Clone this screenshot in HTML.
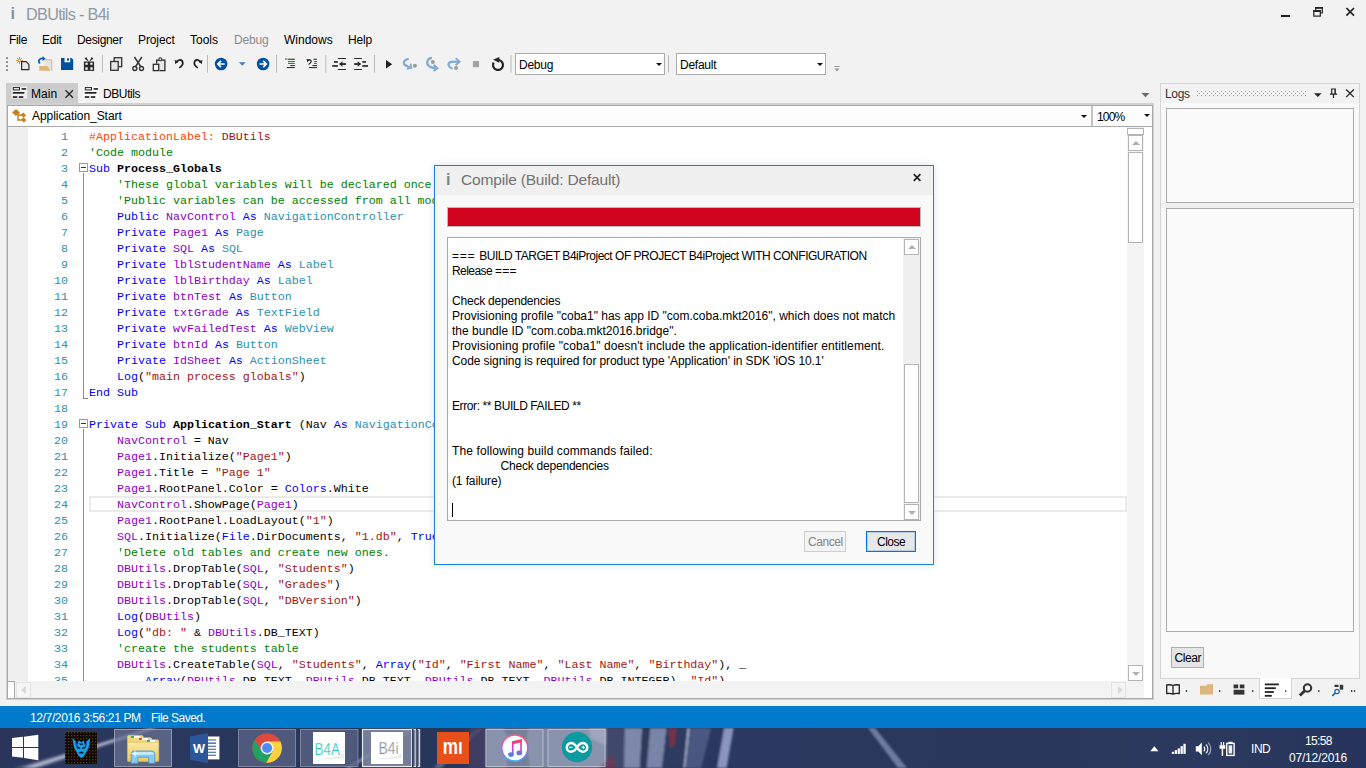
<!DOCTYPE html>
<html lang="en">
<head>
<meta charset="utf-8">
<title>DBUtils - B4i</title>
<style>
*{box-sizing:border-box;margin:0;padding:0}
html,body{width:1366px;height:768px;overflow:hidden;background:#f2f2f2}
body{position:relative;font-family:"Liberation Sans",sans-serif;font-size:12px;color:#1e1e1e}
.abs{position:absolute}
.ui{font-family:"Liberation Sans",sans-serif;font-size:12px;white-space:nowrap;line-height:16px;color:#000}
/* title bar */
#title{left:26px;top:3px;font-size:16.2px;line-height:22px;color:#8e99a5;letter-spacing:-0.68px;white-space:nowrap}
#appico{left:10.5px;top:3px;font-size:16px;line-height:22px;color:#83909a;font-weight:bold}
/* menu */
.menu span{position:absolute;top:32px;line-height:16px;font-size:12px;white-space:nowrap;color:#000}
/* toolbar */
.tsep{position:absolute;top:55px;width:1px;height:18px;background:#bdbdbd}
.combo{position:absolute;top:53px;height:22px;background:#fff;border:1px solid #ababab}
.combo span{position:absolute;left:3px;top:3px;line-height:16px;font-size:12px;letter-spacing:-0.25px;color:#000}
.arr{position:absolute;width:0;height:0;border-left:3px solid transparent;border-right:3px solid transparent;border-top:3px solid #111}
/* tabs */
#tabMain{left:6px;top:83px;width:72px;height:21px;background:#ccc}
/* editor */
#edwrap{left:6px;top:103px;width:1148px;height:597px;background:#d0d0d0}
#edin{left:7px;top:105px;width:1146px;height:594px;background:#a9a9a9}
#subcombo{left:8px;top:106px;width:1083px;height:20px;background:#fdfdfd}
#zoomcombo{left:1093px;top:106px;width:59px;height:20px;background:#fdfdfd}
#editor{left:8px;top:127px;width:1144px;height:554px;background:#fff;overflow:hidden}
#margin{left:0;top:0;width:20px;height:554px;background:#f0f0f0}
#hscroll{left:8px;top:681px;width:1144px;height:17px;background:#f3f3f3}
#vscroll{left:1127px;top:127px;width:17px;height:554px;background:#f3f3f3}
.code{position:absolute;left:0;top:0;font-family:"Liberation Mono",monospace;font-size:11.67px;line-height:16px;white-space:pre}
.ln{position:absolute;left:0;width:60px;text-align:right;color:#2b91af;font-family:"Liberation Mono",monospace;font-size:11.67px;letter-spacing:-0.003px;line-height:16px;height:16px}
.cl{position:absolute;left:81px;font-family:"Liberation Mono",monospace;font-size:11.67px;letter-spacing:-0.003px;line-height:16px;height:16px;white-space:pre;color:#000}
.k{color:#0000ff}.c{color:#008000}.s{color:#a31515}.t{color:#2b91af}.v{color:#8b00c8}.a{color:#ff4500}.b{font-weight:bold;color:#000}
.fold{left:71px;width:9px;height:9px;border:1px solid #9a9a9a;background:#fff}.fold:after{content:"";position:absolute;left:1px;top:3px;width:5px;height:1px;background:#333}
.sbtn{width:15px;height:16px;background:#fff;border:1px solid #b4b4b4}.sbtn i{position:absolute;width:0;height:0}
.dl{position:absolute;font-size:12px;line-height:16px;white-space:pre;color:#000}
/* status */
#status{left:0;top:706px;width:1366px;height:22px;background:#007acc}
#status span{position:absolute;top:4px;color:#fff;font-size:12px;line-height:16px;white-space:nowrap}
/* taskbar */
#taskbar{left:0;top:728px;width:1366px;height:40px;background:#1f2b4d;overflow:hidden}
</style>
</head>
<body>
<!-- TITLE BAR -->
<div class="abs" id="appico">i</div>
<div class="abs" id="title">DBUtils - B4i</div>

<!-- MENU -->
<div class="menu">
<span style="left:9px;letter-spacing:-0.33px">File</span><span style="left:42px;letter-spacing:-0.25px">Edit</span><span style="left:77px;letter-spacing:-0.33px">Designer</span><span style="left:138px;letter-spacing:-0.1px">Project</span><span style="left:190px">Tools</span><span style="left:234px;color:#8a8a8a;letter-spacing:-0.2px">Debug</span><span style="left:284px">Windows</span><span style="left:348px;letter-spacing:-0.2px">Help</span>
</div>

<!-- TOOLBAR -->
<div id="toolbar">
<svg class="abs" style="left:0;top:50px" width="860" height="30" viewBox="0 50 860 30" shape-rendering="auto">
<!-- grip -->
<g fill="#8a8a8a"><rect x="6" y="57.200" width="2" height="1.800"/><rect x="6" y="61.200" width="2" height="1.800"/><rect x="6" y="65.200" width="2" height="1.800"/><rect x="6" y="69.200" width="2" height="1.800"/></g>
<!-- new -->
<g stroke="#d88a1e" stroke-width="1"><path d="M19.500 57v6.800M16.100 60.400h6.800M17.100 58l4.800 4.800M21.900 58l-4.800 4.800"/></g><circle cx="19.500" cy="60.400" r=".9" fill="#f2f2f2"/>
<path d="M21.600 61.700h4.600l2.700 2.700v5.200h-7.300z" fill="#e8e8e8" stroke="#2a2a2a" stroke-width="1.200"/>
<!-- open -->
<rect x="44.500" y="59.800" width="7.200" height="10.800" fill="#e4e4e4"/><path d="M44.500 59.800h7.200v10.900" fill="none" stroke="#dcb67a" stroke-width="1"/>
<path d="M39.300 66.100h8.200l2.800 4.700h-11z" fill="#dcb67a"/>
<path d="M39.900 63.500c-2.300-2.800-.6-5.300 3.300-5" fill="none" stroke="#0a5bb5" stroke-width="1.700"/><path d="M42.700 56.300l3 2.500l-3.200 2.100z" fill="#0a5bb5"/>
<!-- save -->
<path d="M61 57.900h10.300l1.900 1.700v10.500h-12.200z" fill="#0050a0"/><rect x="64.500" y="57.900" width="5.700" height="4.400" fill="#f2f2f2"/><rect x="67.100" y="58.300" width="1.900" height="2.300" fill="#0050a0"/>
<!-- gift -->
<rect x="83.900" y="61.500" width="10.200" height="9.400" fill="#2a2a2a"/><g fill="#f4f4f4"><rect x="85.400" y="62.700" width="2.300" height="2.100"/><rect x="90.300" y="62.700" width="2.300" height="2.100"/><rect x="85.400" y="67.300" width="2.300" height="2.500"/><rect x="90.300" y="67.300" width="2.300" height="2.500"/></g>
<path d="M89 61.700l-4.400-3l1.600-1.600zM89 61.700l4.400-3l-1.600-1.600z" fill="#2a2a2a"/>
<rect x="102" y="55" width="1" height="17.500" fill="#bcbcbc"/>
<!-- copy -->
<g fill="#e8e8e8" stroke="#333" stroke-width="1.300"><rect x="114.200" y="57.700" width="7.500" height="9"/><rect x="110.700" y="61.500" width="7.500" height="8.800"/></g>
<!-- cut -->
<g fill="none" stroke="#333" stroke-width="1.400"><path d="M134.500 57l6.500 10M141.800 57l-6.500 10"/><circle cx="134.800" cy="68.500" r="2"/><circle cx="141.500" cy="68.500" r="2"/></g>
<!-- paste -->
<rect x="156.600" y="60.200" width="8.300" height="10.400" fill="#e6e6e6"/><path d="M156.600 63.500v-3.300h8.300v10.400h-5.300" fill="none" stroke="#2a2a2a" stroke-width="1.300"/><circle cx="160.300" cy="59.200" r="1.500" fill="#f2f2f2" stroke="#2a2a2a" stroke-width="1.100"/>
<rect x="153.300" y="64.300" width="5.400" height="6.300" fill="#f4f4f4" stroke="#2a2a2a" stroke-width="1.300"/>
<!-- undo -->
<path d="M176.6 62.6C177.7 60.4 178.9 59.9 179.8 59.9C181.5 59.9 182.8 61.4 182.8 63.3C182.8 65.2 181.4 66.6 179.3 67.9" fill="none" stroke="#222" stroke-width="1.700"/><path d="M174.7 59.9L178.4 61.2L175.3 64.2z" fill="#222"/>
<!-- redo -->
<path d="M200.5 62.6C199.4 60.4 198.2 59.9 197.3 59.9C195.6 59.9 194.3 61.4 194.3 63.3C194.3 65.2 195.7 66.6 197.8 67.9" fill="none" stroke="#222" stroke-width="1.700"/><path d="M202.4 59.9L198.7 61.2L201.8 64.2z" fill="#222"/>
<rect x="207" y="55" width="1" height="17.700" fill="#bababa"/>
<!-- back -->
<circle cx="221.100" cy="64" r="6.300" fill="#0050a8"/><path d="M224.700 64h-6.500M221 60.900l-3.100 3.100l3.100 3.100" fill="none" stroke="#fff" stroke-width="1.700"/>
<path d="M239 62.300h6.600l-3.300 3.500z" fill="#4678c0"/>
<!-- forward -->
<circle cx="263.100" cy="64" r="6.300" fill="#0050a8"/><path d="M259.500 64h6.500M263.200 60.900l3.100 3.100l-3.100 3.100" fill="none" stroke="#fff" stroke-width="1.700"/>
<rect x="276" y="55" width="1" height="17.700" fill="#bababa"/>
<!-- comment -->
<g><rect x="285" y="58.500" width="1.800" height="1" fill="#333"/><rect x="287.600" y="58.700" width="7.200" height="1.100" fill="#333"/><rect x="288" y="61" width="6.800" height="1.100" fill="#2f8f2f"/><rect x="288" y="62.900" width="6.800" height="1.100" fill="#2f8f2f"/><rect x="290.300" y="65" width="4.500" height="1.100" fill="#333"/><rect x="286.900" y="67" width="7.900" height="1.100" fill="#333"/></g>
<!-- uncomment -->
<g><path d="M308.200 60.600c.8-1.300 3-1 3 .7c0 1.300-1.200 2-2.600 3.200" fill="none" stroke="#222" stroke-width="1.200"/><path d="M306.600 59l3 .4l-2.400 2.800z" fill="#222"/><rect x="313.500" y="58.700" width="3.400" height="1.100" fill="#333"/><rect x="313.900" y="61" width="3" height="1.100" fill="#2f8f2f"/><rect x="313.900" y="62.900" width="3" height="1.100" fill="#2f8f2f"/><rect x="312.400" y="65" width="4.500" height="1.100" fill="#333"/><rect x="308.900" y="67" width="8" height="1.100" fill="#333"/></g>
<rect x="325.200" y="55" width="1" height="17.700" fill="#bababa"/>
<!-- outdent -->
<g fill="#2a2a2a"><rect x="337.900" y="58" width="8" height="1"/><rect x="337.900" y="69" width="8" height="1"/><rect x="334" y="61.100" width="3.900" height="1.700"/><rect x="332.200" y="65.100" width="5.700" height="1.700"/><rect x="341" y="63.100" width="4.900" height="1.900"/><path d="M338.900 64l3.600-2.700v5.400z"/></g>
<!-- indent -->
<g fill="#2a2a2a"><rect x="354.300" y="58" width="7.600" height="1"/><rect x="354.300" y="69" width="7.600" height="1"/><rect x="362.300" y="61.100" width="3.700" height="1.700"/><rect x="362.300" y="65.100" width="5.700" height="1.700"/><rect x="354.300" y="63.100" width="4.600" height="1.900"/><path d="M361.300 64l-3.600-2.700v5.400z"/></g>
<rect x="374" y="55" width="1" height="17.700" fill="#bababa"/>
<!-- play -->
<path d="M386 60v8.400l6.200-4.200z" fill="#222"/>
<!-- step into -->
<g fill="none" stroke="#82aad6" stroke-width="2.200"><path d="M408.800 58.800C405 59 402.700 62 404.600 64.800L409.800 67.400"/><path d="M410.500 63.600L411.400 67.800L406.900 68.900" stroke-width="1.900"/></g><circle cx="414.900" cy="65.800" r="2" fill="#9c9c9c"/>
<!-- step over -->
<g fill="none" stroke="#82aad6" stroke-width="2.200"><path d="M431.900 57.900C427.300 58.200 425.800 63 428.600 65.800C430 67 432 67.700 435.800 68"/><path d="M433.600 64.700L437.500 68.200L433.500 71" stroke-width="1.900"/></g><circle cx="432.900" cy="61.900" r="2" fill="#9c9c9c"/>
<!-- step out -->
<g fill="none" stroke="#82aad6" stroke-width="2.200"><path d="M452.600 68.700C448.500 67.600 447 63.500 450.500 62.100C452 61.700 455 61.700 458.300 61.700"/><path d="M455.700 58.100L459.600 61.700L455.700 65.300" stroke-width="1.900"/></g><circle cx="456" cy="67.900" r="2" fill="#9c9c9c"/>
<!-- stop -->
<rect x="472.900" y="61" width="6.100" height="6.200" fill="#a2a2a2"/>
<!-- restart -->
<path d="M498.900 60A5 5 0 1 1 493.600 62.500" fill="none" stroke="#222" stroke-width="2.200"/><path d="M493.100 59.700L499.300 56.900V62.700z" fill="#222"/>
<rect x="510.500" y="55" width="1" height="17.700" fill="#bababa"/>
<rect x="668" y="55" width="1" height="17.700" fill="#bababa"/>
<!-- overflow -->
<path d="M834.500 66.500h5" stroke="#999" stroke-width="1"/><path d="M834.500 68.500h5l-2.500 3z" fill="#999"/>
</svg>
<div class="combo" style="left:515px;width:150px"><span>Debug</span><i class="arr" style="left:140px;top:9px"></i></div>
<div class="combo" style="left:676px;width:150px"><span>Default</span><i class="arr" style="left:140px;top:9px"></i></div>
<!-- window controls -->
<svg class="abs" style="left:1270px;top:0" width="96" height="28" viewBox="1270 0 96 28">
<rect x="1281" y="15" width="9" height="2" fill="#222"/>
<g fill="none" stroke="#222" stroke-width="1.200"><rect x="1313.800" y="10.800" width="6.500" height="5.300"/><path d="M1315.800 10.200v-2.500h6.500v5.300h-2"/><path d="M1313.200 11h7.700M1315.200 7.900h7.700" stroke-width="1.900"/></g>
<path d="M1346.400 8l7.600 7.700M1354 8l-7.600 7.700" stroke="#222" stroke-width="1.700"/>
</svg>
</div>

<!-- TABS -->
<div class="abs" id="tabMain"></div>
<svg class="abs" style="left:6px;top:83px" width="150" height="21" viewBox="6 83 150 21">
<g id="tabico"><rect x="11.500" y="86.500" width="15.500" height="12" fill="#fff" opacity=".75"/><rect x="13.300" y="87.600" width="6.200" height="2.300" fill="#fff" stroke="#222" stroke-width="1"/><rect x="21.600" y="88.100" width="4.500" height="1.600" fill="#222"/><rect x="12.800" y="92" width="11.600" height="1.700" fill="#222"/><rect x="12.800" y="96.200" width="4.500" height="1.700" fill="#222"/><rect x="18.800" y="96.200" width="4.500" height="1.700" fill="#222"/></g>
<use href="#tabico" x="72"/>
<path d="M65.500 90.300l7.400 7.400M72.900 90.300l-7.400 7.400" stroke="#222" stroke-width="1.300"/>
</svg>
<span class="abs ui" style="left:31px;top:86px;letter-spacing:0.05px">Main</span>
<span class="abs ui" style="left:103px;top:86px;letter-spacing:-0.4px">DBUtils</span>
<svg class="abs" style="left:1140px;top:90px" width="12" height="10"><path d="M1.500 3h8l-4 4.200z" fill="#6d6d6d"/></svg>

<!-- EDITOR -->
<div class="abs" id="edwrap"></div><div class="abs" id="edin"></div><div class="abs" style="left:1091px;top:106px;width:2px;height:20px;background:#c4c4c4"></div>
<div class="abs" id="subcombo"><svg class="abs" style="left:3px;top:2px" width="17" height="16" viewBox="11 108 17 16"><g fill="#c8801e"><path d="M16 109l4 3.500l-4 3.500l-4-3.500z"/><rect x="21.500" y="113.300" width="4" height="3.600" transform="rotate(45 23.500 115)"/><rect x="21.500" y="118" width="4" height="3.600" transform="rotate(45 23.500 120)"/></g><path d="M18 113.500v6.500h4M18 115h4" fill="none" stroke="#c8801e" stroke-width="1.400"/></svg><span class="abs ui" style="left:24px;top:2px;letter-spacing:-0.06px">Application_Start</span><i class="arr" style="left:1073px;top:9px"></i></div>
<div class="abs" id="zoomcombo"><span class="abs ui" style="left:4px;top:3px;letter-spacing:-0.8px">100%</span><i class="arr" style="left:51px;top:8px"></i></div>
<div class="abs" id="editor"><div class="abs" id="margin"></div>
<div class="abs" style="left:81px;top:369px;width:1038px;height:16px;border:2px solid #ebebeb"></div>
<div class="abs" style="left:75px;top:46px;width:1px;height:226px;background:#8c8c8c"></div><div class="abs" style="left:75px;top:271px;width:5px;height:1px;background:#8c8c8c"></div>
<div class="abs" style="left:75px;top:302px;width:1px;height:260px;background:#8c8c8c"></div>
<div class="abs fold" style="top:36px"></div><div class="abs fold" style="top:292px"></div>
<div class="ln" style="top:2px">1</div><div class="cl" style="top:2px"><span class="a">#ApplicationLabel:</span> <span class="s">DBUtils</span></div>
<div class="ln" style="top:18px">2</div><div class="cl" style="top:18px"><span class="c">'Code module</span></div>
<div class="ln" style="top:34px">3</div><div class="cl" style="top:34px"><span class="k">Sub</span> <span class="b">Process_Globals</span></div>
<div class="ln" style="top:50px">4</div><div class="cl" style="top:50px">    <span class="c">'These global variables will be declared once when the application starts.</span></div>
<div class="ln" style="top:66px">5</div><div class="cl" style="top:66px">    <span class="c">'Public variables can be accessed from all modules.</span></div>
<div class="ln" style="top:82px">6</div><div class="cl" style="top:82px">    <span class="k">Public</span> <span class="v">NavControl</span> <span class="k">As</span> <span class="t">NavigationController</span></div>
<div class="ln" style="top:98px">7</div><div class="cl" style="top:98px">    <span class="k">Private</span> <span class="v">Page1</span> <span class="k">As</span> <span class="t">Page</span></div>
<div class="ln" style="top:114px">8</div><div class="cl" style="top:114px">    <span class="k">Private</span> <span class="v">SQL</span> <span class="k">As</span> <span class="t">SQL</span></div>
<div class="ln" style="top:130px">9</div><div class="cl" style="top:130px">    <span class="k">Private</span> <span class="v">lblStudentName</span> <span class="k">As</span> <span class="t">Label</span></div>
<div class="ln" style="top:146px">10</div><div class="cl" style="top:146px">    <span class="k">Private</span> <span class="v">lblBirthday</span> <span class="k">As</span> <span class="t">Label</span></div>
<div class="ln" style="top:162px">11</div><div class="cl" style="top:162px">    <span class="k">Private</span> <span class="v">btnTest</span> <span class="k">As</span> <span class="t">Button</span></div>
<div class="ln" style="top:178px">12</div><div class="cl" style="top:178px">    <span class="k">Private</span> <span class="v">txtGrade</span> <span class="k">As</span> <span class="t">TextField</span></div>
<div class="ln" style="top:194px">13</div><div class="cl" style="top:194px">    <span class="k">Private</span> <span class="v">wvFailedTest</span> <span class="k">As</span> <span class="t">WebView</span></div>
<div class="ln" style="top:210px">14</div><div class="cl" style="top:210px">    <span class="k">Private</span> <span class="v">btnId</span> <span class="k">As</span> <span class="t">Button</span></div>
<div class="ln" style="top:226px">15</div><div class="cl" style="top:226px">    <span class="k">Private</span> <span class="v">IdSheet</span> <span class="k">As</span> <span class="t">ActionSheet</span></div>
<div class="ln" style="top:242px">16</div><div class="cl" style="top:242px">    <span class="k">Log</span>(<span class="s">"main process globals"</span>)</div>
<div class="ln" style="top:258px">17</div><div class="cl" style="top:258px"><span class="k">End Sub</span></div>
<div class="ln" style="top:274px">18</div><div class="cl" style="top:274px"></div>
<div class="ln" style="top:290px">19</div><div class="cl" style="top:290px"><span class="k">Private Sub</span> <span class="b">Application_Start</span> (Nav <span class="k">As</span> <span class="t">NavigationController</span>)</div>
<div class="ln" style="top:306px">20</div><div class="cl" style="top:306px">    <span class="v">NavControl</span> = Nav</div>
<div class="ln" style="top:322px">21</div><div class="cl" style="top:322px">    <span class="v">Page1</span>.Initialize(<span class="s">"Page1"</span>)</div>
<div class="ln" style="top:338px">22</div><div class="cl" style="top:338px">    <span class="v">Page1</span>.Title = <span class="s">"Page 1"</span></div>
<div class="ln" style="top:354px">23</div><div class="cl" style="top:354px">    <span class="v">Page1</span>.RootPanel.Color = <span class="k">Colors</span>.White</div>
<div class="ln" style="top:370px">24</div><div class="cl" style="top:370px">    <span class="v">NavControl</span>.ShowPage(<span class="v">Page1</span>)</div>
<div class="ln" style="top:386px">25</div><div class="cl" style="top:386px">    <span class="v">Page1</span>.RootPanel.LoadLayout(<span class="s">"1"</span>)</div>
<div class="ln" style="top:402px">26</div><div class="cl" style="top:402px">    <span class="v">SQL</span>.Initialize(<span class="k">File</span>.DirDocuments, <span class="s">"1.db"</span>, <span class="k">True</span>)</div>
<div class="ln" style="top:418px">27</div><div class="cl" style="top:418px">    <span class="c">'Delete old tables and create new ones.</span></div>
<div class="ln" style="top:434px">28</div><div class="cl" style="top:434px">    <span class="v">DBUtils</span>.DropTable(<span class="v">SQL</span>, <span class="s">"Students"</span>)</div>
<div class="ln" style="top:450px">29</div><div class="cl" style="top:450px">    <span class="v">DBUtils</span>.DropTable(<span class="v">SQL</span>, <span class="s">"Grades"</span>)</div>
<div class="ln" style="top:466px">30</div><div class="cl" style="top:466px">    <span class="v">DBUtils</span>.DropTable(<span class="v">SQL</span>, <span class="s">"DBVersion"</span>)</div>
<div class="ln" style="top:482px">31</div><div class="cl" style="top:482px">    <span class="k">Log</span>(<span class="v">DBUtils</span>)</div>
<div class="ln" style="top:498px">32</div><div class="cl" style="top:498px">    <span class="k">Log</span>(<span class="s">"db: "</span> &amp; <span class="v">DBUtils</span>.DB_TEXT)</div>
<div class="ln" style="top:514px">33</div><div class="cl" style="top:514px">    <span class="c">'create the students table</span></div>
<div class="ln" style="top:530px">34</div><div class="cl" style="top:530px">    <span class="v">DBUtils</span>.CreateTable(<span class="v">SQL</span>, <span class="s">"Students"</span>, <span class="k">Array</span>(<span class="s">"Id"</span>, <span class="s">"First Name"</span>, <span class="s">"Last Name"</span>, <span class="s">"Birthday"</span>), _</div>
<div class="ln" style="top:546px">35</div><div class="cl" style="top:546px">        <span class="k">Array</span>(<span class="v">DBUtils</span>.DB_TEXT, <span class="v">DBUtils</span>.DB_TEXT, <span class="v">DBUtils</span>.DB_TEXT, <span class="v">DBUtils</span>.DB_INTEGER), <span class="s">"Id"</span>)</div>
</div>
<div class="abs" id="hscroll"><div class="abs" style="left:0;top:0;width:7px;height:17px;background:#fff;border-top:1px solid #a9a9a9;border-right:1px solid #a9a9a9"></div><div class="abs sbtn" style="left:7.500px;top:1px;border-color:#e4e4e4;background:#f6f6f6"><i style="border:4px solid transparent;border-right:5px solid #d8d8d8;border-left:0;left:4px;top:3px"></i></div><div class="abs sbtn" style="left:1103px;top:1px;border-color:#e2e2e2;background:#f4f4f4"><i style="border:4px solid transparent;border-left:5px solid #d8d8d8;border-right:0;left:6px;top:3px"></i></div></div>
<div class="abs" style="left:1144px;top:127px;width:8px;height:571px;background:#fff"></div>
<div class="abs" id="vscroll"><div class="abs" style="left:0;top:1px;width:17px;height:7px;background:#fff;border:1px solid #b4b4b4"></div><div class="abs sbtn" style="left:1px;top:8px"><i style="border:4px solid transparent;border-bottom:4px solid #b0b0b0;border-top:0;left:3px;top:5px"></i></div><div class="abs" style="left:1px;top:25px;width:15px;height:91px;background:#fff;border:1px solid #b4b4b4"></div><div class="abs sbtn" style="left:1px;top:538px"><i style="border:4px solid transparent;border-top:4px solid #b0b0b0;border-bottom:0;left:3px;top:6px"></i></div></div>

<!-- LOGS -->
<div id="logs">
<div class="abs" style="left:1160px;top:83px;width:200px;height:596px;background:#f9f9f9;border:1px solid #d4d4d4"></div>
<div class="abs" style="left:1161px;top:84px;width:198px;height:19px;background:#f2f2f2"></div>
<span class="abs ui" style="left:1165px;top:86px;letter-spacing:-0.3px;color:#333">Logs</span>
<svg class="abs" style="left:1196px;top:88px" width="164" height="12" viewBox="1196 88 164 12">
<defs><pattern id="dots" x="1197" y="91" width="4" height="4" patternUnits="userSpaceOnUse"><rect x="0" y="0" width="1" height="1" fill="#9a9a9a"/><rect x="2" y="2" width="1" height="1" fill="#9a9a9a"/></pattern></defs>
<rect x="1197" y="91" width="109" height="5" fill="url(#dots)"/>
<path d="M1314 93.300h7.600l-3.800 3.600z" fill="#222"/>
<g fill="none" stroke="#222" stroke-width="1.200"><path d="M1331.700 94v-5h3.600v5M1335 89v5" /><path d="M1330 94.200h7.200M1333.500 94.200v3.800"/></g>
<path d="M1346.200 89.500l7.600 7.600M1353.800 89.500l-7.600 7.600" stroke="#222" stroke-width="1.300"/>
</svg>
<div class="abs" style="left:1166px;top:108px;width:188px;height:95px;background:#fafafa;border:1px solid #ababab"></div>
<div class="abs" style="left:1161px;top:203px;width:198px;height:5px;background:#f0f0f0"></div>
<div class="abs" style="left:1166px;top:208px;width:188px;height:424px;background:#fafafa;border:1px solid #ababab"></div>
<div class="abs" style="left:1171px;top:647px;width:33px;height:21px;background:#e5e5e5;border:1px solid #adadad"></div>
<span class="abs ui" style="left:1174.500px;top:650px;letter-spacing:-0.45px;color:#000">Clear</span>
<div class="abs" style="left:1259px;top:678px;width:33px;height:21px;background:#fff;border:1px solid #d4d4d4;border-top:0"></div>
<svg class="abs" style="left:1160px;top:680px" width="200" height="20" viewBox="1160 680 200 20">
<g fill="none" stroke="#222" stroke-width="1.300"><path d="M1173 685.500c-2-.9-4-.9-6.300-.5v8.500c2.300-.4 4.300-.4 6.300.7c2-1.100 4-1.100 6.300-.7v-8.500c-2.300-.4-4.300-.4-6.300.5zM1173 685.500v8.700"/></g>
<path d="M1200 685.800h6l1.500-1.500h5.500v10.300h-13z" fill="#dcb67a"/>
<g fill="#333"><rect x="1233.600" y="684.500" width="4.600" height="3.800"/><rect x="1239.800" y="684.500" width="4.600" height="3.800"/><rect x="1233.600" y="689.800" width="10.800" height="4.800"/></g>
<g fill="#222"><rect x="1264.800" y="683.500" width="14" height="1.800"/><rect x="1264.800" y="687.300" width="11" height="1.800"/><rect x="1264.800" y="691.100" width="9" height="1.800"/><rect x="1264.800" y="694.900" width="7" height="1.800"/></g>
<g fill="none" stroke="#333"><circle cx="1307.500" cy="688" r="3.700" stroke-width="2.100"/><path d="M1304.800 690.700l-5 4.800" stroke-width="2.900"/></g>
<g fill="#333"><rect x="1334.500" y="684.800" width="4" height="2.200"/><rect x="1339.800" y="684.800" width="3.400" height="4.800"/></g><g fill="none" stroke="#1464b4"><circle cx="1337" cy="691.500" r="2.200" stroke-width="1.200"/><path d="M1335.300 693l-3 2.800" stroke-width="1.600"/></g>
<g fill="#2a2a2a"><rect x="1185.800" y="690.200" width="1.300" height="1.700"/><rect x="1219" y="690.200" width="1.300" height="1.700"/><rect x="1252" y="690.200" width="1.300" height="1.700"/><rect x="1285" y="690.200" width="1.400" height="1.800" fill="#1464b4"/><rect x="1318.200" y="690.200" width="1.300" height="1.700"/><rect x="1351" y="690.200" width="1.300" height="1.700"/><rect x="1353.800" y="690.200" width="1.300" height="1.700"/></g>
</svg>
</div>

<!-- DIALOG -->
<div class="abs" id="dialog" style="left:434px;top:165px;width:500px;height:400px;background:#f9f9f9;border:1px solid #1883d7;box-shadow:0 0 8px rgba(120,150,190,.25)"><div class="abs" style="left:-1px;top:0;width:0;height:0">
<div class="abs" style="left:1px;top:0;width:498px;height:29px;background:#f0f0f0"></div>
<div class="abs" style="left:12px;top:3px;font-size:16px;line-height:22px;color:#78848c;font-weight:bold">i</div>
<div class="abs" style="left:27px;top:3px;font-size:15.500px;line-height:22px;color:#727272;white-space:nowrap;letter-spacing:-0.18px">Compile (Build: Default)</div>
<svg class="abs" style="left:474px;top:4px" width="20" height="14"><path d="M5.800 4.200l6.600 6.600M12.400 4.200l-6.600 6.600" stroke="#222" stroke-width="1.700"/></svg>
<div class="abs" style="left:13px;top:41px;width:474px;height:20px;background:#d0021e;border:1px solid #bcbcbc"></div>
<div class="abs" style="left:13px;top:71px;width:474px;height:284px;background:#fff;border:1px solid #ababab"></div>
<div class="dl" style="left:18px;top:82px"><span style="letter-spacing:0.736px">=== </span><span style="letter-spacing:-0.485px">BUILD TARGET B4iProject OF PROJECT B4iProject WITH CONFIGURATION</span></div>
<div class="dl" style="left:18px;top:97px"><span style="letter-spacing:-0.558px">Release </span><span style="letter-spacing:0.292px">===</span></div>
<div class="dl" style="left:18px;top:127px;letter-spacing:-0.210px">Check dependencies</div>
<div class="dl" style="left:18px;top:142px;letter-spacing:-0.001px">Provisioning profile "coba1" has app ID "com.coba.mkt2016", which does not match</div>
<div class="dl" style="left:18px;top:157px;letter-spacing:0.004px">the bundle ID "com.coba.mkt2016.bridge".</div>
<div class="dl" style="left:18px;top:172px;letter-spacing:0.095px">Provisioning profile "coba1" doesn't include the application-identifier entitlement.</div>
<div class="dl" style="left:18px;top:187px;letter-spacing:-0.088px">Code signing is required for product type 'Application' in SDK 'iOS 10.1'</div>
<div class="dl" style="left:18px;top:232px;letter-spacing:-0.396px">Error: ** BUILD FAILED **</div>
<div class="dl" style="left:18px;top:277px;letter-spacing:0.106px">The following build commands failed:</div>
<div class="dl" style="left:66.5px;top:292px;letter-spacing:-0.210px">Check dependencies</div>
<div class="dl" style="left:18px;top:307px;letter-spacing:-0.126px">(1 failure)</div>
<div class="abs" style="left:18px;top:337px;width:1px;height:14px;background:#000"></div>
<div class="abs" style="left:469px;top:72px;width:17px;height:282px;background:#f0f0f0"></div>
<div class="abs sbtn" style="left:470px;top:73px"><i style="border:4px solid transparent;border-bottom:4px solid #b0b0b0;border-top:0;left:3px;top:5px"></i></div>
<div class="abs" style="left:470px;top:198px;width:15px;height:139px;background:#fff;border:1px solid #b4b4b4"></div>
<div class="abs sbtn" style="left:470px;top:338px"><i style="border:4px solid transparent;border-top:4px solid #b0b0b0;border-bottom:0;left:3px;top:6px"></i></div>
<div class="abs" style="left:370px;top:365px;width:42px;height:21px;background:#f4f4f4;border:1px solid #cdcdcd"></div>
<span class="abs ui" style="left:374px;top:368px;letter-spacing:-0.45px;color:#848484">Cancel</span>
<div class="abs" style="left:432px;top:365px;width:50px;height:21px;background:#e7e7e7;border:1px solid #0078d7;box-shadow:inset 0 0 0 1px rgba(0,120,215,.22)"></div>
<span class="abs ui" style="left:443px;top:368px;letter-spacing:-0.5px;color:#000">Close</span>
</div></div>

<!-- STATUS -->
<div class="abs" id="status"><span style="left:30px;letter-spacing:-0.37px">12/7/2016 3:56:21 PM</span><span style="left:151px;letter-spacing:-0.52px">File Saved.</span></div>

<!-- TASKBAR -->
<div class="abs" id="taskbar">
<svg class="abs" style="left:0;top:0" width="1366" height="40" viewBox="0 728 1366 40">
<defs>
<linearGradient id="tbg" x1="0" x2="1" y1="0" y2="0"><stop offset="0" stop-color="#29355a"/><stop offset=".12" stop-color="#2b385e"/><stop offset=".3" stop-color="#29365b"/><stop offset=".55" stop-color="#2b3960"/><stop offset=".75" stop-color="#2a375a"/><stop offset=".88" stop-color="#2b395f"/><stop offset="1" stop-color="#27335a"/></linearGradient>
<linearGradient id="itg" x1="0" x2="0" y1="0" y2="1"><stop offset="0" stop-color="#fb5c74"/><stop offset=".55" stop-color="#b65be0"/><stop offset="1" stop-color="#2fb5f5"/></linearGradient>
<filter id="bl" x="-5%" y="-50%" width="110%" height="200%"><feGaussianBlur stdDeviation="0.8"/></filter>
<linearGradient id="itg2" gradientUnits="userSpaceOnUse" x1="0" x2="0" y1="739" y2="757"><stop offset="0" stop-color="#f5405c"/><stop offset=".5" stop-color="#c04ad0"/><stop offset="1" stop-color="#2f8ff5"/></linearGradient>
<linearGradient id="fold" x1="0" x2="0" y1="0" y2="1"><stop offset="0" stop-color="#fbe9a4"/><stop offset="1" stop-color="#eec85a"/></linearGradient>
<pattern id="chk" x="65" y="732" width="3" height="3" patternUnits="userSpaceOnUse"><rect width="3" height="3" fill="#020202"/><rect x="0" y="0" width="1.400" height="1.400" fill="#4e4210"/><rect x="1.600" y="1.600" width="1" height="1" fill="#5a0e0e"/></pattern>
</defs>
<rect x="0" y="728" width="1366" height="40" fill="url(#tbg)"/>
<!-- wallpaper hints -->
<g filter="url(#bl)">
<path d="M14 768L150 728h9L40 768z" fill="#aab4d0" opacity=".35"/><path d="M22 768L150 728h5L34 768z" fill="#d4d9e8" opacity=".7"/>
<path d="M345 768L413 728h3L350 768z" fill="#c4cbe0" opacity=".6"/>
<path d="M433 768L478 728h5L441 768z" fill="#8e98b6" opacity=".5"/>
<rect x="469" y="728" width="17" height="40" fill="#4a3f66" opacity=".7"/>
<rect x="486" y="728" width="121" height="40" fill="#7f88a3"/>
<path d="M503 728h26l-3 12l4 28h-24l3-28z" fill="#565d78" opacity=".7"/>
<path d="M590 728h17v18l-17-8z" fill="#a9b1c6" opacity=".7"/><path d="M598 768l9-9v9z" fill="#7a2a38" opacity=".6"/>
<path d="M606 728h19l-1.500 40h-17.500z" fill="#3f4a6c"/>
<path d="M624.800 728h17.400l-2.300 40h-16z" fill="#7d88aa"/>
<path d="M642.200 728h8l-3.500 40h-6.800z" fill="#2e385a"/>
<path d="M650.200 728h16.500l-4.700 40h-15.300z" fill="#7984a8"/>
<path d="M666.700 728h21l-4 40h-21.700z" fill="#2f3a5e"/>
<path d="M669 728h7l-1 16l-5 4z" fill="#8a3040" opacity=".8"/>
<path d="M687.700 728h2l-4.500 40h-1.500z" fill="#b0b8d4"/>
<path d="M689.700 728h21.500l-10 40h-16z" fill="#4a5880"/>
<path d="M711.200 728h13l-7 40h-16z" fill="#2c3860"/>
<path d="M724.200 728h9.400l-7 40h-9.400z" fill="#8a94bc"/>
<path d="M607 760l6-5l3 13h-9z" fill="#8a3040" opacity=".55"/>
<path d="M868 728h7l32 40h-9z" fill="#7f8bb0" opacity=".8"/>
</g>
<!-- start -->
<g fill="#fff"><path d="M12 738L23 736.800V747H12z"/><path d="M24 736.700L38.300 734.700V747H24z"/><path d="M12 748H23V757.700L12 756.400z"/><path d="M24 748H38.300V760.200L24 757.900z"/></g>
<!-- decepticon -->
<rect x="65" y="732" width="32" height="32" fill="url(#chk)"/>
<path d="M72.300 738l3.600 3.400l1.200 5l1.600-6.200l2.500 2.300l2.500-2.300l1.600 6.200l1.200-5l3.600-3.400l-1.300 9.500l-2.800 5l-1.700 3.200l-2.900 2.500l-2.900-2.500l-1.700-3.200l-2.800-5z" fill="#16a0ea"/><path d="M75 740.500l2 3.500l.5 4l-1.700-2zM87.400 740.500l-2 3.500l-.5 4l1.700-2z" fill="#0b62c8"/>
<path d="M76.600 746.300l3.600 1.300v1.300l-3.200-.6zM85.800 746.300l-3.600 1.300v1.300l3.200-.6zM78.600 752.400l2.600-1.200l2.600 1.200l-1 1.200h-3.200zM79.300 743.500h3.800l-.6 1.600h-2.600z" fill="#0a1830"/>
<!-- explorer box -->
<rect x="114.500" y="729.500" width="57" height="37" fill="#6b7594" fill-opacity=".7" stroke="#a4aabd" stroke-opacity=".8"/>
<path d="M127.300 743v-6.800l1-1h14l1.200 1.200v1h7.200l1.200 1.200v.8h6l1 1v2.600z" fill="#f0d780"/>
<rect x="130.900" y="736.100" width="3" height="1.800" fill="#22b83a"/><rect x="134.100" y="736.100" width="5.800" height="1.800" fill="#fff"/>
<rect x="139" y="738.100" width="2.800" height="1.800" fill="#e23a28"/><rect x="142" y="738.100" width="5.800" height="1.800" fill="#fff"/>
<rect x="146.900" y="740" width="3.100" height="1.900" fill="#2a9af0"/><rect x="150.200" y="740" width="4.800" height="1.900" fill="#fff"/>
<rect x="127.500" y="742.300" width="31.300" height="19.300" rx="1.200" fill="url(#fold)" stroke="#e0bc58" stroke-width=".6"/>
<path d="M131.100 763.300v-10.300l2-2h19.700l2 2v10.300h-6.100v-6.100h-10.800v6.100z" fill="#86cbee" stroke="#3f9ad0" stroke-width=".8"/><path d="M132.600 753.200l1.200-1.200h18.400l1.200 1.200v1.600h-20.800z" fill="#c6eafa"/>
<path d="M135 750v7.400M131.300 753.700h7.400" stroke="#fff" stroke-width=".7" opacity=".9"/><circle cx="135" cy="753.700" r="1.300" fill="#fff"/>
<!-- word -->
<rect x="208" y="736.500" width="11.400" height="22.900" fill="#fff"/><g stroke="#2b579a" stroke-width="1.100"><path d="M208 740h8M208 743.100h8M208 746.200h8M208 749.200h8M208 752.200h8M208 755.200h8"/></g>
<path d="M190 736.500l18-3.500v29.900l-18-3.100z" fill="#2b579a"/>
<text x="199" y="752.800" font-family="Liberation Sans, sans-serif" font-weight="bold" font-size="13.500" fill="#fff" text-anchor="middle" textLength="12" lengthAdjust="spacingAndGlyphs">W</text>
<!-- chrome box -->
<rect x="238.500" y="729.500" width="57" height="37" fill="#5b6686" fill-opacity=".75" stroke="#8d94ab" stroke-opacity=".8"/>
<g transform="translate(267.100 748)"><circle r="14.8" fill="#dd4b3e"/><path d="M0.00 -6.50L13.30 -6.50A14.8 14.8 0 0 1 -1.02 14.76L5.63 3.25z" fill="#fdd13f"/><path d="M5.63 3.25L-1.02 14.76A14.8 14.8 0 0 1 -12.28 -8.26L-5.63 3.25L0 0z" fill="#1ea362"/><circle r="6.5" fill="#f6f6f6"/><circle r="5" fill="#4c8bf5"/></g>
<!-- b4a box -->
<rect x="300.500" y="729.500" width="57.500" height="37" fill="#5b6686" fill-opacity=".75" stroke="#8d94ab" stroke-opacity=".8"/>
<rect x="313" y="732" width="32" height="32" fill="#fff"/><path d="M315 757c8 2.500 22 1.500 29-4v4.500c-8 2.500-21 2.500-29-.5z" fill="#e6efee"/>
<text x="314.600" y="754.800" font-family="Liberation Sans, sans-serif" font-size="16.500" fill="#1fc6be" stroke="#fff" stroke-width=".25" textLength="25.300" lengthAdjust="spacingAndGlyphs">B4A</text>
<!-- b4i box -->
<rect x="362.500" y="729.500" width="49.200" height="37" fill="#8089a3" fill-opacity=".85" stroke="#e6e8ee" stroke-width="1.200"/><rect x="413.400" y="729.500" width="2.600" height="37" fill="#7f88a3"/><path d="M413.400 729.500h2.600v37h-2.600" fill="none" stroke="#e6e8ee" stroke-width="1"/><rect x="417.400" y="729.500" width="2.300" height="37" fill="#7f88a3"/><path d="M417.400 729.500h2.300v37h-2.300" fill="none" stroke="#e6e8ee" stroke-width="1"/><rect x="412.300" y="729" width="1" height="38" fill="#1c2444"/><rect x="416.500" y="729" width="1" height="38" fill="#1c2444"/>
<rect x="371" y="732" width="32" height="32" fill="#fff"/><path d="M373 757c8 2.500 22 1.500 29-4v4.500c-8 2.500-21 2.500-29-.5z" fill="#e9edee"/>
<text x="378.600" y="754" font-family="Liberation Sans, sans-serif" font-size="16.500" fill="#7a8e96" stroke="#fff" stroke-width=".25" textLength="20" lengthAdjust="spacingAndGlyphs">B4i</text>
<!-- mi -->
<rect x="437" y="732" width="32" height="32" fill="#e8501a"/>
<text x="442.700" y="753.700" font-family="Liberation Sans, sans-serif" font-weight="bold" font-size="22" fill="#fff" textLength="20" lengthAdjust="spacingAndGlyphs">mı</text>
<!-- itunes -->
<rect x="486" y="729.500" width="57" height="37" fill="#a0a8bf" fill-opacity=".35" stroke="#c0c5d3" stroke-opacity=".85"/>
<circle cx="514.800" cy="748" r="13" fill="#fff" stroke="url(#itg)" stroke-width="1.400"/>
<g fill="url(#itg2)"><path d="M511.900 741.200l10-2.300v3.300l-8.300 1.900v10.400h-1.700z"/><path d="M520.200 741v11.600h1.700v-13.500z"/><ellipse cx="510.900" cy="754.600" rx="2.900" ry="2.300"/><ellipse cx="519.300" cy="752.900" rx="2.900" ry="2.300"/></g>
<!-- arduino -->
<rect x="548" y="729.500" width="57" height="37" fill="#a0a8bf" fill-opacity=".35" stroke="#c0c5d3" stroke-opacity=".85"/>
<circle cx="577.050" cy="747.150" r="15.150" fill="#0a9a9f"/>
<path d="M577 747.4C575.2 744.6 573.6 743.05 571.1 743.05A4.35 4.35 0 1 0 571.1 751.75C573.6 751.75 575.2 750.2 577 747.4C578.8 744.6 580.4 743.05 582.9 743.05A4.35 4.35 0 1 1 582.9 751.75C580.4 751.75 578.8 750.2 577 747.4z" fill="none" stroke="#fff" stroke-width="2.500"/><path d="M569.2 747.4h3.200M581.7 747.4h3.200M583.3 745.8v3.200" stroke="#fff" stroke-width="1.100"/>
<!-- tray -->
<path d="M1150.200 751.300h8.300l-4.150-5z" fill="#fff"/>
<g fill="#fff"><rect x="1171.8" y="751.8" width="2.300" height="2.1"/><rect x="1174.7" y="750.2" width="2.300" height="3.7"/><rect x="1177.6" y="748.4" width="2.300" height="5.5"/><rect x="1180.5" y="746.1" width="2.300" height="7.8"/><rect x="1183.4" y="743.8" width="2.300" height="10.1"/></g>
<g fill="#fff"><path d="M1195.800 746.200h2.600l3.400-3.600v12.600l-3.400-3.600h-2.600z"/></g><g fill="none" stroke="#fff" stroke-width="1.200"><path d="M1203.800 746.600a3.200 3.200 0 0 1 0 4.600"/><path d="M1206 744.500a6.200 6.200 0 0 1 0 8.800" opacity=".85"/><path d="M1208.200 742.600a9 9 0 0 1 0 12.600" opacity=".55"/></g>
<g fill="none" stroke="#fff"><rect x="1226.700" y="743.400" width="7.400" height="12" stroke-width="1.400"/><path d="M1228.400 742.400h4.200" stroke-width="1.200"/><path d="M1221.200 742v3.200M1223.600 742v3.200" stroke-width="1.200"/><path d="M1220.200 745.800h4.400v2.400h-4.400z" stroke-width="1.300" fill="#fff"/><path d="M1222.400 748v8" stroke-width="1.500"/></g><rect x="1228.600" y="745.300" width="3.600" height="8.200" fill="#fff" opacity=".92"/>
</svg>
<span class="abs ui" style="left:1251px;top:13px;color:#fff;letter-spacing:-0.45px">IND</span>
<span class="abs ui" style="left:1305px;top:5px;color:#fff;letter-spacing:-0.67px">15:58</span>
<span class="abs ui" style="left:1289px;top:22px;color:#fff;letter-spacing:-0.2px">07/12/2016</span>
</div>
</body>
</html>
